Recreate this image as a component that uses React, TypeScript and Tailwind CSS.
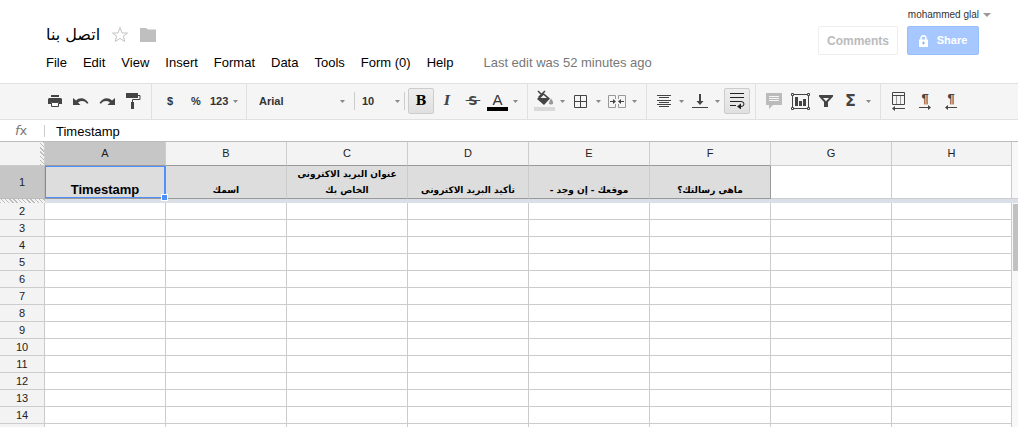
import { ReactNode } from "react";

const MENUS = ["File", "Edit", "View", "Insert", "Format", "Data", "Tools", "Form (0)", "Help"];

const COLUMNS = ["A", "B", "C", "D", "E", "F", "G", "H"];

const HEADINGS = [
  "Timestamp",
  "اسمك",
  "عنوان البريد الاكترونى الخاص بك",
  "تأكيد البريد الاكترونى",
  "موقعك - إن وجد -",
  "ماهى رسالتك؟",
  "",
  "",
];

const ROWS = Array.from({ length: 13 }, (_, i) => i + 2);

const HATCH = "bg-[repeating-linear-gradient(45deg,#bdbdbd_0px,#bdbdbd_1px,#f3f3f3_1px,#f3f3f3_3px)]";

function Caret() {
  return (
    <svg width="5" height="3" viewBox="0 0 5 3" className="shrink-0" fill="#888" aria-hidden="true">
      <path d="M0 0h5L2.500 3z" />
    </svg>
  );
}

function Group({ children, last }: { children: ReactNode; last?: boolean }) {
  return (
    <div className={`flex shrink-0 px-[5px] pt-1 pb-[5px] ${last ? "" : "border-r border-[#e0e0e0]"}`}>
      {children}
    </div>
  );
}

function Tool({ label, children, active }: { label: string; children: ReactNode; active?: boolean }) {
  return (
    <button
      type="button"
      aria-label={label}
      aria-pressed={active}
      className={`flex h-[26px] w-[26px] shrink-0 items-center justify-center text-[11px] font-bold text-[#333] ${
        active ? "rounded-xs border border-[#ccc] bg-linear-to-b from-[#eee] to-[#e0e0e0]" : ""
      }`}
    >
      {children}
    </button>
  );
}

// Icon with a drop-down arrow beside it
function MenuTool({ label, children }: { label: string; children: ReactNode }) {
  return (
    <button type="button" aria-label={label} className="flex h-[26px] w-9 shrink-0 items-center">
      <span className="flex w-[23px] justify-center">{children}</span>
      <span className="ml-1">
        <Caret />
      </span>
    </button>
  );
}

function Icon({ w = 20, h = 20, children }: { w?: number; h?: number; children: ReactNode }) {
  return (
    <svg width={w} height={h} viewBox={`0 0 ${w} ${h}`} className="shrink-0" fill="#444" aria-hidden="true">
      {children}
    </svg>
  );
}

function Header() {
  return (
    <header className="flex h-[83px] shrink-0 justify-between pr-[27px] pl-[46px]">
      <div className="flex flex-col pt-[23px]">
        <div className="flex h-6 items-center">
          <h1 dir="rtl" className="font-['DejaVu_Sans',sans-serif] text-base leading-6">اتصل بنا</h1>
          <button type="button" aria-label="Star" className="ml-[11px]">
            <svg width="18" height="18" viewBox="0 0 18 18" fill="none" stroke="#c4c4c4" aria-hidden="true">
              <path d="M9 1.500l2 5.500h5.500l-4.300 3.300 1.600 5.200L9 12.400l-4.800 3.100 1.600-5.200L1.500 7H7z" />
            </svg>
          </button>
          <button type="button" aria-label="Move to folder" className="ml-[11px]">
            <svg width="16" height="14" viewBox="0 0 16 14" fill="#bfbfbf" aria-hidden="true">
              <path d="M0 0h6l2 1.500h8V14H0z" />
            </svg>
          </button>
        </div>
        <div className="flex h-8 items-center text-[13px] whitespace-nowrap">
          <nav className="flex gap-4">
            {MENUS.map((m) => (
              <button key={m} type="button">{m}</button>
            ))}
          </nav>
          <span className="ml-[30px] text-[#777]">Last edit was 52 minutes ago</span>
        </div>
      </div>

      <div className="flex flex-col items-end pt-[7px]">
        <button type="button" className="flex h-[15px] items-center gap-1 text-[10px] whitespace-nowrap text-[#333]">
          mohammed glal
          <svg width="8" height="4" viewBox="0 0 8 4" fill="#999" aria-hidden="true">
            <path d="M0 0h8L4 4z" />
          </svg>
        </button>
        <div className="mt-1 mr-3 flex gap-[9px] text-[11px] font-bold">
          <button type="button" className="h-[29px] w-20 rounded-xs border border-[#eee] text-xs text-[#bbb]">
            Comments
          </button>
          <button type="button" className="flex h-[29px] w-[72px] items-center justify-center gap-[9px] rounded-xs border border-[#97bffb] bg-[#a6c8ff] text-white">
            <svg width="9" height="12" viewBox="0 0 9 12" aria-hidden="true">
              <path d="M2 5V3.200a2.500 2.500 0 0 1 5 0V5" fill="none" stroke="#fff" strokeWidth="1.500" />
              <path d="M0 4.500h9V12H0z" fill="#fff" />
              <path d="M4 6.500h1v1h1v1H5v1H4v-1H3v-1h1z" fill="#8ab4f8" />
            </svg>
            Share
          </button>
        </div>
      </div>
    </header>
  );
}

function Toolbar() {
  return (
    <div role="toolbar" className="flex shrink-0 overflow-hidden border-y border-[#e0e0e0] bg-[#f5f5f5] pl-[37px]">
      <Group>
        <Tool label="Print">
          <Icon w={14} h={12}>
            <path d="M3 0h8v2H3zM1 3h12l1 1v5h-3V7H3v2H0V4z" />
            <path d="M3.500 7.500h7v4h-7z" fill="#fff" stroke="#444" />
          </Icon>
        </Tool>
        <Tool label="Undo">
          <Icon w={16} h={9}>
            <path d="M0 1l3 2.500C6.500 0 12.500.5 15.500 6l-1.500.7C11.500 3.500 8 3.500 5 5.500L7.500 8H0z" />
          </Icon>
        </Tool>
        <Tool label="Redo">
          <Icon w={16} h={9}>
            <path d="M16 1l-3 2.500C9.500 0 3.500.5.5 6l1.500.7C4.500 3.500 8 3.500 11 5.500L8.500 8H16z" />
          </Icon>
        </Tool>
        <Tool label="Paint format">
          <Icon w={15} h={16}>
            <path d="M0 0h12v5H0z" />
            <path d="M12 2.500h2v4H6.500V9" fill="none" stroke="#444" />
            <path d="M5 9h3v7H5z" />
          </Icon>
        </Tool>
      </Group>

      <Group>
        <Tool label="Format as currency">$</Tool>
        <Tool label="Format as percent">%</Tool>
        <button type="button" className="flex h-[26px] w-8 items-center gap-[5px] pl-px text-[11px] font-bold text-[#333]">
          123
          <Caret />
        </button>
      </Group>

      <Group>
        <div className="relative flex h-[26px] w-[102px] items-center">
          <select aria-label="Font" className="h-full w-full appearance-none pl-[7px] text-[11px] font-bold text-[#333]">
            <option>Arial</option>
          </select>
          <span className="pointer-events-none absolute right-[9px]"><Caret /></span>
        </div>
        <div className="my-1 w-px bg-[#ccc]" />
        <div className="relative flex h-[26px] w-[49px] items-center">
          <select aria-label="Font size" className="h-full w-full appearance-none pl-[7px] text-[11px] font-bold text-[#333]">
            <option>10</option>
          </select>
          <span className="pointer-events-none absolute right-1"><Caret /></span>
        </div>
        <div className="my-1 mr-[3px] w-px bg-[#ccc]" />
        <Tool label="Bold" active>
          <span className="font-['DejaVu_Serif',serif] text-[13px] text-black">B</span>
        </Tool>
        <Tool label="Italic">
          <span className="font-['DejaVu_Serif',serif] text-[13px] text-[#444] italic">I</span>
        </Tool>
        <Tool label="Strikethrough">
          <span className="flex items-center justify-center">
            <span className="font-['DejaVu_Sans',sans-serif] text-[13px] text-[#444]">
              <s>&thinsp;S&thinsp;</s>
            </span>
          </span>
        </Tool>
        <MenuTool label="Text color">
          <span className="flex w-[21px] flex-col items-center text-[15px] leading-[15px] text-[#333]">
            A
            <span className="h-1 w-full bg-black" />
          </span>
        </MenuTool>
      </Group>

      <Group>
        <MenuTool label="Fill color">
          <Icon w={21} h={22}>
            <path d="M4 1l5 5M11 1L4.500 7.500" stroke="#444" strokeWidth="1.500" />
            <path d="M9.500 3L16 8.500 10 15 3 9z" />
            <path d="M9.500 5L6.500 8h6.500z" fill="#f5f5f5" />
            <path d="M17 8.500q2.500 3.300 2 4.700-.5 1.300-2 1.300t-2-1.300q-.3-1.400 2-4.700z" fill="#999" />
            <path d="M0 17h21v4H0z" fill="#d9d9d9" />
          </Icon>
        </MenuTool>
        <MenuTool label="Borders">
          <Icon w={13} h={13}>
            <path d="M.5.5h12v12H.5zM6.500 0v13M0 6.500h13" fill="none" stroke="#444" />
          </Icon>
        </MenuTool>
        <MenuTool label="Merge cells">
          <Icon w={18} h={13}>
            <path d="M7.500 4V.5h-7v12h7V9M10.500 4V.5h7v12h-7V9" fill="none" stroke="#999" />
            <path d="M2 6h3V4l3 2.500L5 9V7H2zM16 6h-3V4l-3 2.500L13 9V7h3z" />
          </Icon>
        </MenuTool>
      </Group>

      <Group>
        <MenuTool label="Horizontal align">
          <Icon w={14} h={12}>
            <path d="M0 0h14v1H0zM2 2h10v1H2zM0 5h14v1H0zM2 7h10v1H2zM0 9h14v1H0zM2 11h10v1H2z" />
          </Icon>
        </MenuTool>
        <MenuTool label="Vertical align">
          <Icon w={16} h={14}>
            <path d="M7 0h2v7h2.500L8 11 4.500 7H7zM0 13h16v1H0z" />
          </Icon>
        </MenuTool>
        <Tool label="Wrap text" active>
          <Icon w={15} h={16}>
            <path d="M0 .5h14M0 4.500h14M0 8.500h11q3 0 3 2.500t-3 2.500H9M0 12.500h6" fill="none" stroke="#222" />
            <path d="M11 10.500v6l-4-3z" fill="#222" />
          </Icon>
        </Tool>
      </Group>

      <Group>
        <Tool label="Insert comment">
          <Icon w={16} h={16}>
            <path d="M0 0h16v12H7l-4 4v-4H0z" fill="#bbb" />
            <path d="M3 3h10v1H3zM3 5h10v1H3zM3 7h10v1H3z" fill="#f5f5f5" />
          </Icon>
        </Tool>
        <Tool label="Insert chart">
          <Icon w={19} h={17}>
            <path d="M1.500 1.500h16v14h-16z" fill="none" stroke="#444" />
            <path d="M.5.5h2v2h-2zM16.500.5h2v2h-2zM.5 14.500h2v2h-2zM16.500 14.500h2v2h-2z" fill="#f5f5f5" stroke="#444" />
            <path d="M4 4h3v9H4zM8 8h3v5H8zM12 6h3v7h-3z" />
          </Icon>
        </Tool>
        <Tool label="Filter">
          <Icon w={14} h={12}>
            <path fillRule="evenodd" d="M0 0h14v1.500L9 7v5H5V7L0 1.500zM4 3l3 3.200L10 3z" />
          </Icon>
        </Tool>
        <MenuTool label="Functions">
          <span className="font-['DejaVu_Sans',sans-serif] text-base leading-4 font-bold text-[#444]">Σ</span>
        </MenuTool>
      </Group>

      <Group last>
        <Tool label="Sheet direction">
          <Icon w={14} h={19}>
            <path d="M.5.5h12v12H.5z" fill="none" stroke="#444" />
            <path d="M1 3h11v1H1z" />
            <path d="M4.500 4v8M8.500 4v8" stroke="#999" />
            <path d="M3 14v2h10v1H3v2L0 16.500z" />
          </Icon>
        </Tool>
        <Tool label="Left-to-right text">
          <span className="flex flex-col items-center text-[13px] leading-3 text-[#444]">
            ¶
            <Icon w={12} h={5}>
              <path d="M0 2h9V0l3 2.500L9 5V3H0z" />
            </Icon>
          </span>
        </Tool>
        <Tool label="Right-to-left text">
          <span className="flex flex-col items-center text-[13px] leading-3 text-[#444]">
            ¶
            <Icon w={12} h={5}>
              <path d="M12 2H3V0L0 2.500 3 5V3h9z" />
            </Icon>
          </span>
        </Tool>
      </Group>
    </div>
  );
}

function FormulaBar() {
  return (
    <div className="flex h-[21px] shrink-0 items-center">
      <label htmlFor="formula" className="flex w-11 items-baseline pl-[15px] font-['DejaVu_Sans',sans-serif] text-[13px] leading-5 text-[#777]">
        <i>f</i>x
      </label>
      <div className="h-3 w-px bg-[#ccc]" />
      <input id="formula" defaultValue="Timestamp" className="h-full min-w-0 flex-1 pt-px pl-[11px] text-[13px] outline-none" />
    </div>
  );
}

function Sheet() {
  return (
    <div className="flex min-h-0 flex-1 overflow-hidden border-t border-[#bbb]">
      <div className="min-w-0 flex-1">
        <table className="w-full table-fixed border-separate border-spacing-0">
          <colgroup>
            <col className="w-[45px]" />
            {COLUMNS.slice(0, -1).map((c) => (
              <col key={c} className="w-[121px]" />
            ))}
            <col />
          </colgroup>
          <thead>
            <tr className="text-[11px] text-[#222]">
              <td className="h-6 border-r border-b border-[#ccc] bg-[#f3f3f3] p-0">
                <div className={`ml-auto h-[23px] w-1 ${HATCH}`} />
              </td>
              {COLUMNS.map((c, i) => (
                <th
                  key={c}
                  scope="col"
                  className={`h-6 border-r border-b border-r-[#ccc] p-0 font-normal ${i === 0 ? "bg-[#c6c6c6]" : "bg-[#f3f3f3]"} ${
                    i < 6 ? "border-b-[#999]" : "border-b-[#ccc]"
                  }`}
                >
                  {c}
                </th>
              ))}
            </tr>
          </thead>
          <tbody>
            <tr>
              <th scope="row" className="h-[33px] border-r border-b border-[#bbb] bg-[#c6c6c6] p-0 text-[11px] font-normal text-[#222]">
                1
              </th>
              {HEADINGS.map((text, i) => (
                <td
                  key={i}
                  className={`relative h-[33px] border-r border-b px-1 py-0 text-center align-bottom font-bold ${
                    i < 6 ? "border-b-[#999] bg-[#ddd]" : "border-b-[#ccc]"
                  } ${i === 5 ? "border-r-[#999]" : "border-r-[#ccc]"} ${
                    i === 0 ? "text-[13px] leading-4" : "px-2 font-['DejaVu_Sans',sans-serif] text-[9px] leading-4"
                  }`}
                >
                  <div dir={i === 0 ? "ltr" : "rtl"}>{text}</div>
                  {i === 0 && (
                    <div className="absolute -right-px top-0 bottom-0 left-0 z-10 border border-r-2 border-[#4d90fe]">
                      <div className="absolute -right-1 -bottom-1 h-[7px] w-[7px] border border-white bg-[#4d90fe]" />
                    </div>
                  )}
                </td>
              ))}
            </tr>
            {/* frozen row divider */}
            <tr aria-hidden="true">
              <td className={`h-1 p-0 ${HATCH}`} />
              <td colSpan={8} className="h-1 bg-[#dadfe8] p-0" />
            </tr>
            {ROWS.map((n) => (
              <tr key={n}>
                <th scope="row" className="h-[17px] border-r border-b border-[#ccc] bg-[#f3f3f3] p-0 text-[11px] leading-4 font-normal text-[#222]">
                  {n}
                </th>
                {COLUMNS.map((c) => (
                  <td key={c} className="h-[17px] border-r border-b border-[#ccc] p-0" />
                ))}
              </tr>
            ))}
            {/* blank filler under the last loaded row */}
            <tr aria-hidden="true">
              <td className="h-[17px] border-r border-[#ccc] bg-[#f3f3f3] p-0" />
              {COLUMNS.map((c) => (
                <td key={c} className="h-[17px] border-r border-[#ccc] p-0" />
              ))}
            </tr>
          </tbody>
        </table>
      </div>
      <div className="w-[6px] shrink-0 bg-[#f8f8f8]" aria-hidden="true">
        <div className="h-[57px] border-b border-[#ccc]" />
        <div className="h-1 bg-[#dadfe8]" />
        <div className="mt-px ml-px h-[67px] bg-[#c1c1c1]" />
      </div>
    </div>
  );
}

export default function App() {
  return (
    <div className="flex h-screen flex-col overflow-hidden bg-white font-['Liberation_Sans',Arial,sans-serif] text-black">
      <Header />
      <Toolbar />
      <FormulaBar />
      <Sheet />
    </div>
  );
}
